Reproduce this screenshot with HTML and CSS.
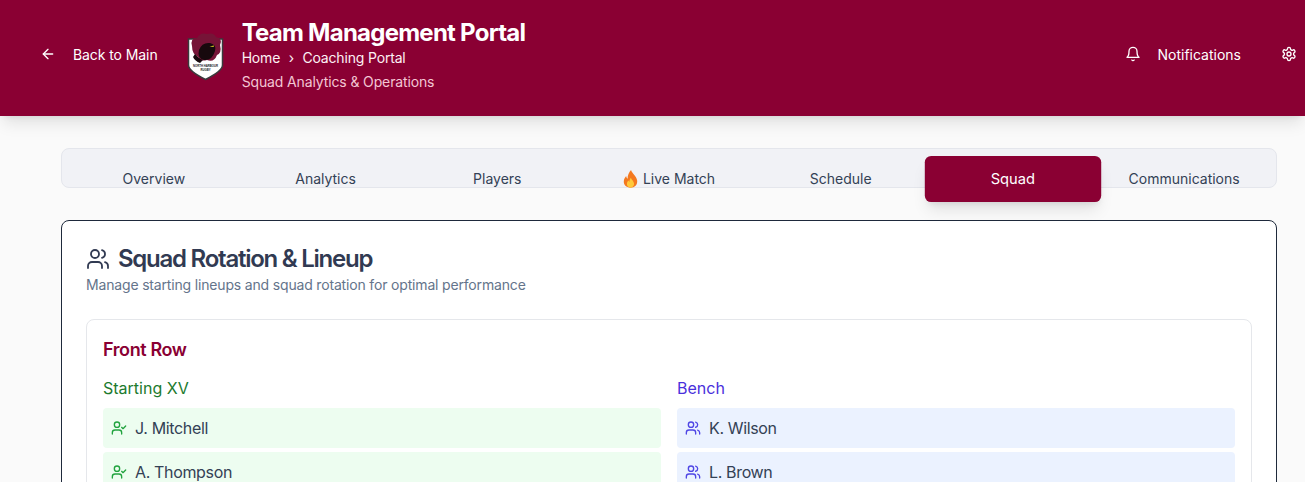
FILE: index.html
```html
<!DOCTYPE html>
<html lang="en">
<head>
    <meta charset="UTF-8">
    <title>Team Management Portal</title>
    <link rel="stylesheet" href="styles.css">
</head>
<body>
    <!-- header -->
    <header class="topbar">
        <div class="topbar-left">
            <a class="back-link" href="#">
                <svg class="icon" viewBox="0 0 24 24"><path d="m12 19-7-7 7-7"/><path d="M19 12H5"/></svg>
                <span>Back to Main</span>
            </a>
            <svg class="logo" viewBox="0 0 38 47">
                <path d="M1.5 6 H35.5 V32 Q35.5 38 18.5 46.5 Q1.5 38 1.5 32 Z" fill="#fff" stroke="#3a3a3c" stroke-width="1.5"/>
                <path d="M5 13 Q3 5 10 5 Q13 -1 20 1 Q27 -1 29 4 Q36 5 33 12 Q35 20 30 22 Q27 30 20 27 Q13 29 11 24 Q5 21 5 13 Z" fill="#761437"/>
                <path d="M12 17 Q15 9 23 10 Q30 12 28 18 Q25 28 17 27 Q10 25 12 17 Z" fill="#17090d"/>
                <path d="M8 21 Q12 26 16 27 L13 30 Q8 28 6 24 Z" fill="#17090d"/>
                <path d="M22.5 13.4 L27 12.4 L26.6 14 Z" fill="#d8c924"/>
                <text class="logo-text" x="18.5" y="34">NORTH HARBOUR</text>
                <text class="logo-text" x="18.5" y="37.6">RUGBY</text>
            </svg>
            <div class="titles">
                <h1>Team Management Portal</h1>
                <div class="crumbs">
                    <span>Home</span>
                    <span class="sep">›</span>
                    <span>Coaching Portal</span>
                </div>
                <p class="tagline">Squad Analytics &amp; Operations</p>
            </div>
        </div>
        <div class="topbar-right">
            <a class="notify" href="#">
                <svg class="icon" viewBox="0 0 24 24"><path d="M6 8a6 6 0 0 1 12 0c0 7 3 9 3 9H3s3-2 3-9"/><path d="M10.3 21a1.94 1.94 0 0 0 3.4 0"/></svg>
                <span>Notifications</span>
            </a>
            <svg class="icon" viewBox="0 0 24 24"><path d="M12.22 2h-.44a2 2 0 0 0-2 2v.18a2 2 0 0 1-1 1.73l-.43.25a2 2 0 0 1-2 0l-.15-.08a2 2 0 0 0-2.73.73l-.22.38a2 2 0 0 0 .73 2.73l.15.1a2 2 0 0 1 1 1.72v.51a2 2 0 0 1-1 1.74l-.15.09a2 2 0 0 0-.73 2.73l.22.38a2 2 0 0 0 2.73.73l.15-.08a2 2 0 0 1 2 0l.43.25a2 2 0 0 1 1 1.73V20a2 2 0 0 0 2 2h.44a2 2 0 0 0 2-2v-.18a2 2 0 0 1 1-1.73l.43-.25a2 2 0 0 1 2 0l.15.08a2 2 0 0 0 2.73-.73l.22-.39a2 2 0 0 0-.73-2.73l-.15-.08a2 2 0 0 1-1-1.74v-.5a2 2 0 0 1 1-1.74l.15-.09a2 2 0 0 0 .73-2.73l-.22-.38a2 2 0 0 0-2.73-.73l-.15.08a2 2 0 0 1-2 0l-.43-.25a2 2 0 0 1-1-1.73V4a2 2 0 0 0-2-2z"/><circle cx="12" cy="12" r="3"/></svg>
        </div>
    </header>

    <main class="content">
        <!-- tabs -->
        <nav class="tabs">
            <div class="tab">Overview</div>
            <div class="tab">Analytics</div>
            <div class="tab">Players</div>
            <div class="tab">
                <svg class="flame" viewBox="0 0 16 20">
                    <path d="M8.6 0 C9.4 3.4 14.6 6.6 15.4 11.6 C16 16.4 12.6 19.6 8 19.6 C3.4 19.6 0 16.6 .6 12 C.9 9.6 2.2 8 3.2 6.8 C3.4 8.2 3.8 9.2 4.8 9.8 C4.6 6 6.4 2.4 8.6 0 Z" fill="#f4791f"/>
                    <path d="M8.4 8.6 C9 10.8 12 12.6 12 15.4 C12 18 10.2 19.6 8 19.6 C5.8 19.6 4 18 4 15.6 C4 13.8 5 12.6 5.8 11.8 C6 12.6 6.3 13 6.8 13.3 C6.8 11.6 7.4 10 8.4 8.6 Z" fill="#ffc93a"/>
                </svg>
                Live Match
            </div>
            <div class="tab">Schedule</div>
            <div class="tab active">Squad</div>
            <div class="tab">Communications</div>
        </nav>

        <!-- squad card -->
        <section class="card">
            <h2 class="card-title">
                <svg class="icon icon-lg" viewBox="0 0 24 24"><path d="M16 21v-2a4 4 0 0 0-4-4H6a4 4 0 0 0-4 4v2"/><circle cx="9" cy="7" r="4"/><path d="M22 21v-2a4 4 0 0 0-3-3.87"/><path d="M16 3.13a4 4 0 0 1 0 7.75"/></svg>
                Squad Rotation &amp; Lineup
            </h2>
            <p class="card-sub">Manage starting lineups and squad rotation for optimal performance</p>

            <div class="unit">
                <h3 class="unit-title">Front Row</h3>
                <div class="unit-cols">
                    <div>
                        <h4 class="col-title starting">Starting XV</h4>
                        <div class="player starting">
                            <svg class="icon" viewBox="0 0 24 24"><path d="M16 21v-2a4 4 0 0 0-4-4H6a4 4 0 0 0-4 4v2"/><circle cx="9" cy="7" r="4"/><polyline points="16 11 18 13 22 9"/></svg>
                            <span>J. Mitchell</span>
                        </div>
                        <div class="player starting">
                            <svg class="icon" viewBox="0 0 24 24"><path d="M16 21v-2a4 4 0 0 0-4-4H6a4 4 0 0 0-4 4v2"/><circle cx="9" cy="7" r="4"/><polyline points="16 11 18 13 22 9"/></svg>
                            <span>A. Thompson</span>
                        </div>
                    </div>
                    <div>
                        <h4 class="col-title bench">Bench</h4>
                        <div class="player bench">
                            <svg class="icon" viewBox="0 0 24 24"><path d="M16 21v-2a4 4 0 0 0-4-4H6a4 4 0 0 0-4 4v2"/><circle cx="9" cy="7" r="4"/><path d="M22 21v-2a4 4 0 0 0-3-3.87"/><path d="M16 3.13a4 4 0 0 1 0 7.75"/></svg>
                            <span>K. Wilson</span>
                        </div>
                        <div class="player bench">
                            <svg class="icon" viewBox="0 0 24 24"><path d="M16 21v-2a4 4 0 0 0-4-4H6a4 4 0 0 0-4 4v2"/><circle cx="9" cy="7" r="4"/><path d="M22 21v-2a4 4 0 0 0-3-3.87"/><path d="M16 3.13a4 4 0 0 1 0 7.75"/></svg>
                            <span>L. Brown</span>
                        </div>
                    </div>
                </div>
            </div>
        </section>
    </main>
</body>
</html>
```

FILE: styles.css
```css
*{
    margin: 0;
    padding: 0;
    box-sizing: border-box;
}

html, body{
    height: 482px;
    overflow: hidden;
}

body{
    background-color: #fafafa;
    color: #334155;
    font-family: Inter, "Liberation Sans", sans-serif;
}

a{
    color: inherit;
    text-decoration: none;
}

.icon{
    width: 16px;
    height: 16px;
    flex: none;
    fill: none;
    stroke: currentColor;
    stroke-width: 2;
    stroke-linecap: round;
    stroke-linejoin: round;
}

.icon-lg{
    width: 24px;
    height: 24px;
    stroke-width: 1.8;
}

/* header */
.topbar{
    height: 116px;
    padding: 0 8px 0 40px;
    display: flex;
    align-items: center;
    justify-content: space-between;
    background-color: #8a0033;
    color: #fff;
    box-shadow: 0 10px 15px -3px rgba(0,0,0,.1), 0 4px 6px -4px rgba(0,0,0,.1);
}

.topbar-left{
    display: flex;
    align-items: center;
}

.back-link{
    display: flex;
    align-items: center;
    gap: 17px;
    margin-bottom: 8px;
    font-size: 14px;
    font-weight: 400;
    letter-spacing: -.08px;
}

.logo{
    width: 38px;
    height: 47px;
    margin: 0 17px 3px 29px;
    overflow: visible;
}

.logo-text{
    font-family: "Liberation Sans", sans-serif;
    font-size: 2.8px;
    font-weight: 700;
    fill: #222;
    text-anchor: middle;
}

.titles{
    padding-bottom: 7px;
}

.titles h1{
    font-size: 24px;
    line-height: 32px;
    font-weight: 700;
    letter-spacing: -.75px;
    margin-bottom: -1px;
}

.crumbs{
    display: flex;
    gap: 8.5px;
    font-size: 14px;
    line-height: 20px;
    letter-spacing: -.17px;
    color: #fdf0f4;
}

.tagline{
    margin-top: 4px;
    font-size: 14px;
    line-height: 20px;
    letter-spacing: -.13px;
    color: #f3c6d4;
}

.topbar-right{
    display: flex;
    align-items: center;
    gap: 40px;
    margin-bottom: 8px;
}

.notify{
    display: flex;
    align-items: center;
    gap: 16px;
    font-size: 14px;
    font-weight: 400;
}

/* main */
.content{
    padding: 32px 28px 0 61px;
}

.tabs{
    height: 40px;
    padding: 8px 8px 0;
    display: grid;
    grid-template-columns: repeat(7, 1fr);
    gap: 4px;
    background-color: #f1f2f6;
    border: 1px solid #e4e6ec;
    border-radius: 8px;
}

.tab{
    height: 44px;
    display: flex;
    align-items: center;
    justify-content: center;
    gap: 5px;
    font-size: 14px;
    line-height: 20px;
    font-weight: 400;
    color: #334155;
    border-radius: 6px;
}

.tab.active{
    background-color: #8a0033;
    color: #fff;
    transform: scale(1.05);
    box-shadow: 0 10px 15px -3px rgba(0,0,0,.1), 0 4px 6px -4px rgba(0,0,0,.1);
}

.flame{
    width: 15px;
    height: 18px;
}

.card{
    margin-top: 32px;
    padding: 24px;
    height: 320px;
    background-color: #fff;
    border: 1px solid #1e293b;
    border-radius: 8px;
}

.card-title{
    display: flex;
    align-items: center;
    gap: 8px;
    font-size: 24px;
    line-height: 28px;
    font-weight: 600;
    letter-spacing: -1.25px;
    color: #313a52;
}

.card-sub{
    margin-top: 2px;
    font-size: 14px;
    line-height: 20px;
    letter-spacing: -.17px;
    color: #64748b;
}

.unit{
    margin-top: 24px;
    padding: 16px;
    background-color: #fff;
    border: 1px solid #e5e7eb;
    border-radius: 8px;
}

.unit-title{
    font-size: 18px;
    line-height: 28px;
    font-weight: 600;
    letter-spacing: -.4px;
    color: #8a0033;
}

.unit-cols{
    margin-top: 12px;
    display: grid;
    grid-template-columns: 1fr 1fr;
    gap: 16px;
}

.col-title{
    margin-bottom: 8px;
    font-size: 16px;
    line-height: 24px;
    font-weight: 400;
}

.col-title.starting{
    color: #1c7a2e;
}

.col-title.bench{
    color: #4a30dc;
}

.player{
    height: 40px;
    margin-bottom: 4px;
    padding: 0 8px;
    display: flex;
    align-items: center;
    gap: 8px;
    font-size: 16px;
    letter-spacing: -.35px;
    color: #334155;
    border-radius: 4px;
}

.player.starting{
    background-color: #edfdf0;
}

.player.starting .icon{
    color: #22a33f;
}

.player.bench{
    background-color: #ebf2ff;
}

.player.bench .icon{
    color: #4f46e5;
}
```
